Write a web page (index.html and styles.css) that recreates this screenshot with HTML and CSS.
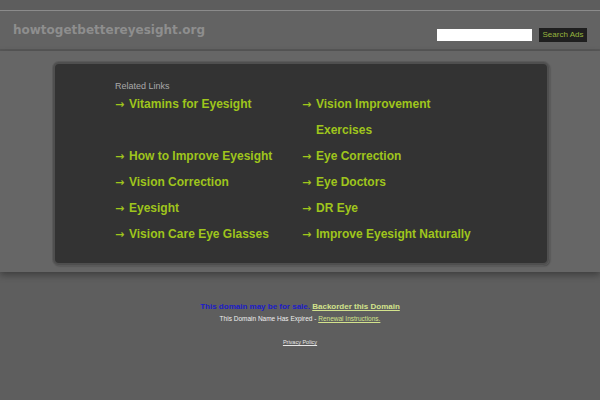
FILE: index.html
```html
<!DOCTYPE html>
<html>
<head>
<meta charset="utf-8">
<link rel="stylesheet" href="styles.css">
</head>
<body>
<div class="topbar"></div>
<div class="header">
  <div class="site">howtogetbettereyesight.org</div>
  <form class="search">
    <input class="search-input" type="text">
    <span class="search-btn">Search Ads</span>
  </form>
</div>
<div class="main">
  <div class="panel">
    <div class="related">Related Links</div>
    <ul class="links">
      <li><a href="#">Vitamins for Eyesight</a></li>
      <li><a href="#">Vision Improvement Exercises</a></li>
      <li><a href="#">How to Improve Eyesight</a></li>
      <li><a href="#">Eye Correction</a></li>
      <li><a href="#">Vision Correction</a></li>
      <li><a href="#">Eye Doctors</a></li>
      <li><a href="#">Eyesight</a></li>
      <li><a href="#">DR Eye</a></li>
      <li><a href="#">Vision Care Eye Glasses</a></li>
      <li><a href="#">Improve Eyesight Naturally</a></li>
    </ul>
  </div>
</div>
<div class="footer">
  <p class="sale"><span class="sale-text">This domain may be for sale.</span> <a href="#" class="sale-link">Backorder this Domain</a></p>
  <p class="expired">This Domain Name Has Expired - <a href="#">Renewal Instructions.</a></p>
  <p class="privacy"><a href="#">Privacy Policy</a></p>
</div>
</body>
</html>
```
FILE: styles.css
```css
html, body {
  margin: 0;
  padding: 0;
}
body {
  background: #5e5e5e;
  font-family: "Liberation Sans", Arial, sans-serif;
  width: 600px;
  height: 400px;
  overflow: hidden;
}
.topbar {
  height: 10px;
  background: #5d5d5d;
}
.header {
  height: 38px;
  background: #636363;
  border-top: 1px solid #8b8b8b;
  border-bottom: 2px solid #585858;
  display: flex;
  align-items: flex-start;
  justify-content: space-between;
  padding: 0 13px 0 13px;
}
.site {
  font-family: "DejaVu Sans", Verdana, sans-serif;
  font-weight: bold;
  font-size: 12px;
  line-height: 14px;
  color: #8e8e8e;
  margin-top: 12px;
}
.search {
  display: flex;
  align-items: center;
  gap: 7px;
  margin: 17px 0 0 0;
}
.search-input {
  width: 95px;
  height: 12px;
  border: none;
  padding: 0;
  margin: 0;
  background: #ffffff;
  outline: none;
}
.search-btn {
  display: block;
  width: 48px;
  height: 14px;
  line-height: 14px;
  background: #1f1f1f;
  color: #97b53e;
  font-size: 8px;
  text-align: center;
}
.main {
  background: #666666;
  padding: 11px 53px 7px 53px;
  box-shadow: 0 3px 7px rgba(0, 0, 0, 0.35);
  position: relative;
}
.panel {
  height: 183px;
  background: #333333;
  border: 2px solid #4f4f4f;
  border-radius: 6px;
  box-shadow: 0 0 0 1px #5a5a5a, 1px 1px 2px rgba(0, 0, 0, 0.4);
  padding: 16px 0 0 60px;
  box-sizing: content-box;
  width: 432px;
}
.related {
  font-size: 9px;
  line-height: 11px;
  color: #a9a9a9;
  padding-top: 1px;
}
.links {
  list-style: none;
  margin: 0;
  padding: 0;
  display: grid;
  grid-template-columns: 187px 187px;
  font-size: 12px;
  font-weight: bold;
  line-height: 26px;
}
.links li {
  padding-left: 14px;
  text-indent: -14px;
  color: #9fc51c;
}
.links li:first-child,
.links li:nth-child(2) {
  margin-top: -1px;
}
.links li::before {
  content: "\2192";
  font-family: "DejaVu Sans", sans-serif;
  font-weight: bold;
  font-size: 11px;
  line-height: 10px;
  display: inline-block;
  width: 14px;
  text-indent: 0;
}
.links a {
  color: #9fc51c;
  text-decoration: none;
}
.footer {
  text-align: center;
  padding-top: 29px;
}
.footer p {
  margin: 0;
}
.sale {
  font-size: 8px;
  line-height: 12px;
  font-weight: bold;
}
.sale-text {
  color: #1c1cc8;
}
.sale-link {
  color: #d3e38c;
}
.expired {
  font-size: 6.5px;
  line-height: 12px;
  color: #eeeeee;
}
.expired a {
  color: #d3e38c;
}
.privacy {
  font-size: 5.5px;
  line-height: 10px;
  margin-top: 12px !important;
}
.privacy a {
  color: #e6e6e6;
}
```
